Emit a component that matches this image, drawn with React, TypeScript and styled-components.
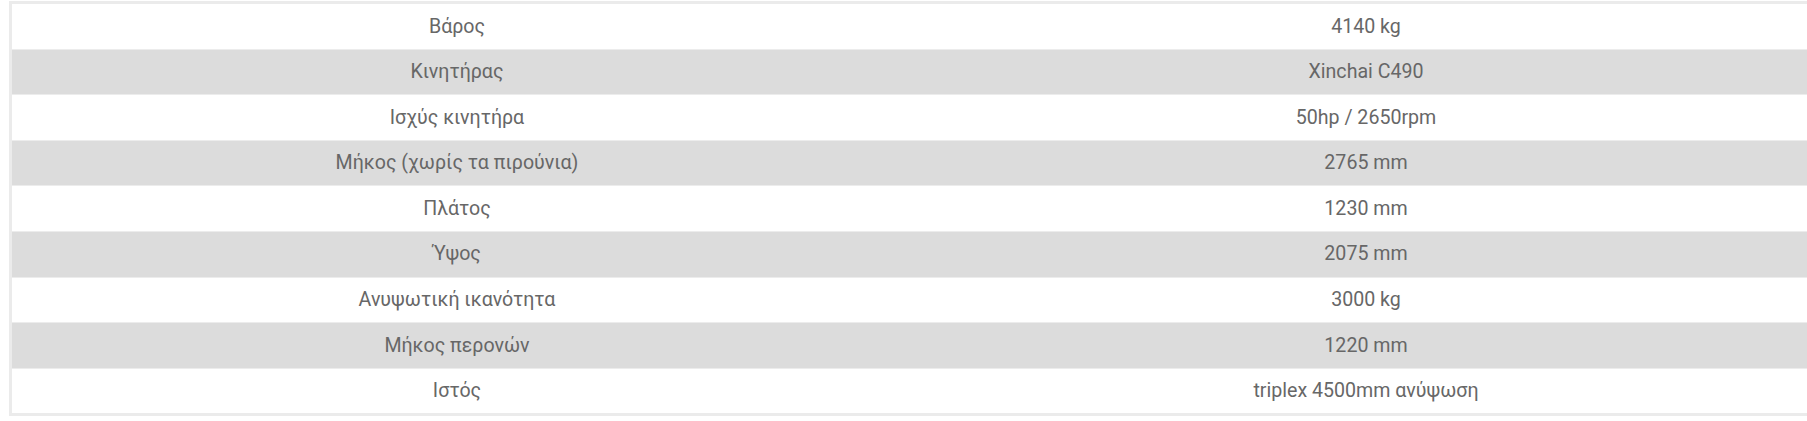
import React from "react";
import styled, { createGlobalStyle } from "styled-components";

const GlobalStyle = createGlobalStyle`
  html, body {
    margin: 0;
    padding: 0;
    background: #ffffff;
    overflow: hidden;
  }
  body {
    font-family: Roboto, "Noto Sans", "Liberation Sans", sans-serif;
  }
`;

const Page = styled.div`
  padding: 1px 0 0 9px;
  overflow: hidden;
`;

const SpecTable = styled.table`
  border-collapse: separate;
  border-spacing: 0;
  table-layout: fixed;
  width: 1824px;
  border: 3px solid #ebebeb;
`;

const Row = styled.tr<{ $shaded: boolean }>`
  background: ${(p) => (p.$shaded ? "#dcdcdc" : "#ffffff")};
`;

const Cell = styled.td<{ $first: boolean }>`
  text-align: center;
  vertical-align: middle;
  font-size: 19.6px;
  line-height: 27.6px;
  color: #676767;
  padding: 8.5px 0;
  border-top: ${(p) => (p.$first ? "0" : "1px solid #ececec")};
  height: 27.6px;
  white-space: nowrap;
`;

const rows: [string, string][] = [
  ["Βάρος", "4140 kg"],
  ["Κινητήρας", "Xinchai C490"],
  ["Ισχύς κινητήρα", "50hp / 2650rpm"],
  ["Μήκος (χωρίς τα πιρούνια)", "2765 mm"],
  ["Πλάτος", "1230 mm"],
  ["Ύψος", "2075 mm"],
  ["Ανυψωτική ικανότητα", "3000 kg"],
  ["Μήκος περονών", "1220 mm"],
  ["Ιστός", "triplex 4500mm ανύψωση"],
];

export default function App() {
  return (
    <>
      <GlobalStyle />
      <Page>
        <SpecTable>
          <colgroup>
            <col style={{ width: 890 }} />
            <col style={{ width: 928 }} />
          </colgroup>
          <tbody>
            {rows.map(([label, value], i) => (
              <Row key={label} $shaded={i % 2 === 1}>
                <Cell $first={i === 0}>{label}</Cell>
                <Cell $first={i === 0}>{value}</Cell>
              </Row>
            ))}
          </tbody>
        </SpecTable>
      </Page>
    </>
  );
}
